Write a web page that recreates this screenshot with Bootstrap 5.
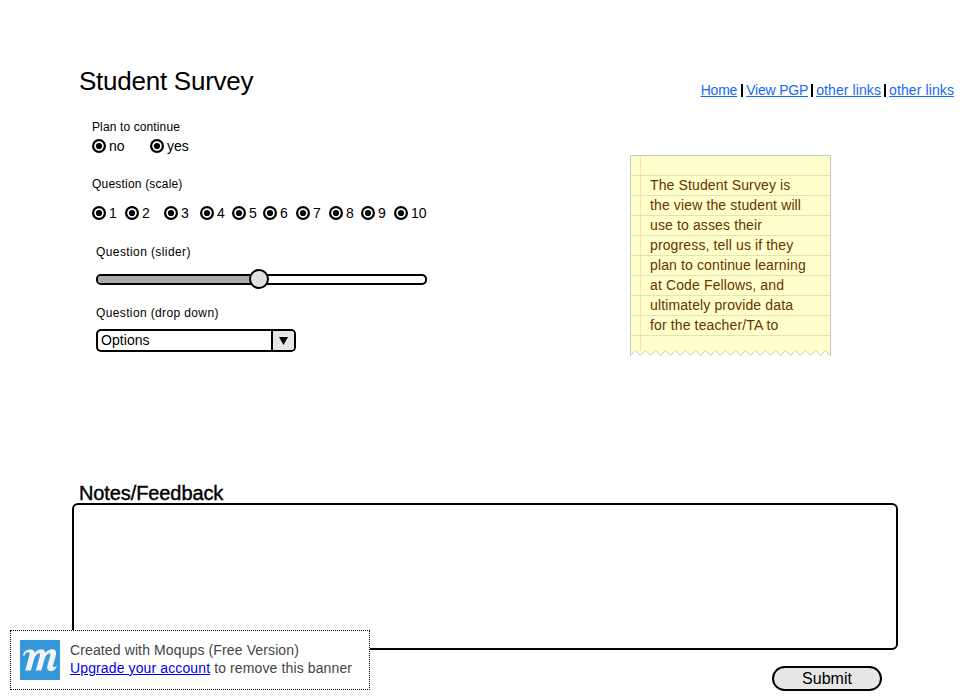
<!DOCTYPE html>
<html lang="en">
<head>
<meta charset="utf-8">
<title>Student Survey</title>
<link href="https://cdn.jsdelivr.net/npm/bootstrap@5.3.0/dist/css/bootstrap.min.css" rel="stylesheet">
<style>
body{font:14px/16px "Liberation Sans",Arial,sans-serif;color:#000;background:#fff;width:960px;height:700px}
.page{height:700px}
.survey{width:360px;padding:66px 0 0 79px}
h1{font-size:26px;line-height:30px;letter-spacing:-.25px;font-weight:400}
.q{font-size:12px;line-height:16px;letter-spacing:.2px}
.q-plan{margin:23px 0 3px 13px;letter-spacing:.12px}
.q-scale{margin:22px 0 13px 13px}
.q-slider{margin:23px 0 9px 17px;letter-spacing:.4px}
.q-drop{margin:15px 0 8px 17px;letter-spacing:.37px}
.opts{margin-left:13px;height:16px}
.opt{display:flex;align-items:center;flex:none;gap:3px}
.dot{width:14px;height:14px;flex:none}
.w33{width:33px}.w39{width:39px}.w36{width:36px}.w32{width:32px}.w31{width:31px}.w58{width:58px}
.slider{width:331px;height:21px;margin-left:17px;padding-top:5px}
.track{height:11px;border:2px solid #000;border-radius:5px;overflow:hidden}
.fill{height:100%;background:#aaa}
.knob{width:20px;height:20px;left:153px;top:0;border:2px solid #000;background:#e0e0e0}
.drop{width:200px;height:23px;margin-left:17px;border:2px solid #000;border-radius:5px;line-height:19px;overflow:hidden}
.drop-text{padding-left:3px;letter-spacing:.05px}
.drop-btn{width:23px;border-left:2px solid #000;background:#e6e6e6}
.side{padding-top:82px;width:330px}
.links{padding-right:6px}
.links a{color:#1669f2;text-underline-offset:1px;text-decoration-thickness:1px}
.links .tight{letter-spacing:-.2px}
.links .even{letter-spacing:.1px}
.bar{width:2px;height:13px;background:#000;margin:2px 3px 0 4px}
.bar-near{margin-left:3px}
.sticky{width:201px;height:201px;margin-top:57px;color:#630}
.sticky p{line-height:20px;padding:20px 0 0 20px;letter-spacing:.13px;white-space:pre}
.upper{height:482px}
h2{font-size:20px;line-height:21px;letter-spacing:-.1px;font-weight:400;-webkit-text-stroke:.4px #000;padding:1px 0 0 7px;height:21px}
.notes{width:826px;margin-left:72px}
.notes-box{height:147px;border:2px solid #000;border-radius:6px;background:#fff;resize:none}
.submit{width:110px;height:25px;margin:16px 16px 0 0;border:2px solid #000;background:#e6e6e6;font-size:16px;line-height:21px;color:#000}
.banner{left:10px;top:630px;width:360px;height:60px;border:1px dotted #000;background:#fff;color:#444;line-height:18px;letter-spacing:.12px;padding:9px;gap:10px}
.banner-text{padding-top:1px}
.banner a{color:#00e}
</style>
<script src="https://cdn.jsdelivr.net/npm/bootstrap@5.3.0/dist/js/bootstrap.bundle.min.js"></script>
</head>
<body class="overflow-hidden">
<svg class="d-none"><symbol id="radio" viewBox="0 0 14 14"><circle cx="7" cy="7" r="5.900" fill="#fff" stroke="#000" stroke-width="2.200"/><circle cx="7" cy="7" r="3.100"/></symbol></svg>
<main class="page position-relative">
  <div class="upper d-flex justify-content-between">
    <form class="survey text-nowrap">
      <h1 class="m-0">Student Survey</h1>
      <div class="q q-plan">Plan to continue</div>
      <div class="opts d-flex">
        <label class="opt w58"><svg class="dot"><use href="#radio"/></svg>no</label>
        <label class="opt"><svg class="dot"><use href="#radio"/></svg>yes</label>
      </div>
      <div class="q q-scale">Question (scale)</div>
      <div class="opts d-flex">
        <label class="opt w33"><svg class="dot"><use href="#radio"/></svg>1</label>
        <label class="opt w39"><svg class="dot"><use href="#radio"/></svg>2</label>
        <label class="opt w36"><svg class="dot"><use href="#radio"/></svg>3</label>
        <label class="opt w32"><svg class="dot"><use href="#radio"/></svg>4</label>
        <label class="opt w31"><svg class="dot"><use href="#radio"/></svg>5</label>
        <label class="opt w33"><svg class="dot"><use href="#radio"/></svg>6</label>
        <label class="opt w33"><svg class="dot"><use href="#radio"/></svg>7</label>
        <label class="opt w32"><svg class="dot"><use href="#radio"/></svg>8</label>
        <label class="opt w33"><svg class="dot"><use href="#radio"/></svg>9</label>
        <label class="opt"><svg class="dot"><use href="#radio"/></svg>10</label>
      </div>
      <div class="q q-slider">Question (slider)</div>
      <div class="slider position-relative">
        <div class="track"><div class="fill w-50"></div></div>
        <div class="knob position-absolute rounded-circle"></div>
      </div>
      <div class="q q-drop">Question (drop down)</div>
      <div class="drop d-flex">
        <span class="drop-text flex-grow-1">Options</span>
        <span class="drop-btn d-flex align-items-center justify-content-center"><svg width="9" height="8"><path d="M0 0h9L4.500 8z"/></svg></span>
      </div>
    </form>
    <aside class="side">
      <nav class="links d-flex justify-content-end text-nowrap">
        <a href="#" class="tight">Home</a><span class="bar"></span>
        <a href="#" class="tight">View PGP</a><span class="bar bar-near"></span>
        <a href="#" class="even">other links</a><span class="bar bar-near"></span>
        <a href="#" class="even">other links</a>
      </nav>
      <div class="sticky position-relative">
        <svg class="position-absolute top-0 start-0" width="201" height="201">
          <path id="paper" fill="#ffc" stroke="#c8c8c8"/>
          <path d="M10.500 1V196" stroke="#ffdfb0"/>
          <path d="M1 20.500H200M1 40.500H200M1 60.500H200M1 80.500H200M1 100.500H200M1 120.500H200M1 140.500H200M1 160.500H200M1 180.500H200" stroke="#e6e2b8"/>
        </svg>
        <p class="position-relative m-0">The Student Survey is
the view the student will
use to asses their
progress, tell us if they
plan to continue learning
at Code Fellows, and
ultimately provide data
for the teacher/TA to</p>
      </div>
    </aside>
  </div>
  <section class="notes">
    <h2 class="m-0">Notes/Feedback</h2>
    <textarea class="notes-box d-block w-100" aria-label="Notes"></textarea>
    <div class="d-flex justify-content-end"><button class="submit rounded-pill p-0">Submit</button></div>
  </section>
  <div class="banner position-absolute d-flex text-nowrap">
    <svg width="40" height="40" viewBox="0 0 40 40" class="flex-shrink-0"><rect width="40" height="40" fill="#3498db"/>
      <path fill="#f4f4f4" d="M3 15.500C3.500 11.500 6.500 9.500 10.500 9.500C13.500 9.500 14.800 10.800 14.500 13C16.500 10.500 18.800 9.300 21.300 9.300C24 9.300 25.200 10.700 25.200 13C27.200 10.500 29.500 9.300 32 9.300C35.800 9.300 36.800 12 35.800 15.500L33 25.500C32.500 27.500 34.500 28 37 25.200C36.200 28.800 34 31 31 31C27.800 31 26.600 28.800 27.500 25.500L30.200 15.800C30.800 13.500 29.800 12.700 28.300 13.700C26.500 14.800 25.200 16.500 24.500 19L21.300 30.600H15.800L19.900 15.800C20.500 13.500 19.500 12.700 18 13.700C16 15 14.700 16.800 14 19.300L10.900 30.600H5.200L9.500 15C10 13 9 12 7.200 12.300C5.600 12.600 5 13.700 5.200 15.300Z"/></svg>
    <div class="banner-text">Created with Moqups (Free Version)<br><a href="#">Upgrade your account</a> to remove this banner</div>
  </div>
</main>
<script>
// torn lower edge of the paper
let d='M.5 200.5V.5H200.5V200.5';
for(let x=195.5;x>=.5;x-=5)d+='L'+x+' '+(Math.round((x-.5)/5)%2?195.5:200.5);
document.getElementById('paper').setAttribute('d',d+'Z');
</script>
</body>
</html>
